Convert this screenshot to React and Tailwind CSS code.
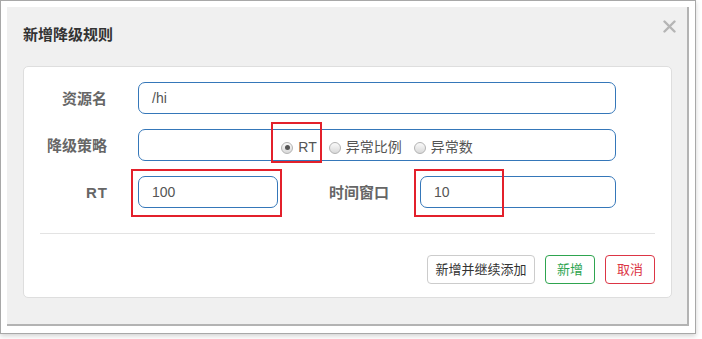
import React from 'react';

const font = { fontFamily: '"Liberation Sans", "Noto Sans CJK SC", sans-serif' };

const Radio = ({ checked, label }) => (
    <label className="flex items-center">
        <span className="w-[12px] h-[12px] rounded-full border border-[#b3b3b3] bg-gradient-to-b from-[#fafafa] to-[#d9d9d9] flex items-center justify-center">
            {checked && <span className="w-[5px] h-[5px] rounded-full bg-[#555]" />}
        </span>
        <span className="ml-[5px] text-[14px] text-[#555]">{label}</span>
    </label>
);

const Field = ({ value, className }) => (
    <div className={`h-[32px] rounded-[7px] border border-[#3577b9] bg-white flex items-center pl-[13px] text-[14px] text-[#555] ${className}`}>
        {value}
    </div>
);

const RedBox = ({ className }) => (
    <div className={`absolute border-2 border-[#e3202b] pointer-events-none ${className}`} />
);

const App = () => {
    return (
        <div className="w-[702px] h-[339px] bg-white" style={font}>
            <div className="w-[696px] h-[334px] border border-[#a8a8a8] bg-white pt-[6px] pl-[6px] shadow-[0_2px_5px_rgba(0,0,0,0.18)]">
                <div className="relative w-[682px] h-[319px] bg-[#f0f0f0] border-r-2 border-b-2 border-[#b3b3b3]">
                    <div className="h-[59px] flex items-center pl-[16px] pb-[2px]">
                        <span className="text-[15px] font-bold text-[#333]">新增降级规则</span>
                    </div>
                    <button className="absolute right-[11px] top-[12px] w-[14px] h-[14px] flex items-center justify-center">
                        <svg width="13" height="13" viewBox="0 0 13 13">
                            <path d="M1.5 1.5 L11.5 11.5 M11.5 1.5 L1.5 11.5" stroke="#b5b5b5" strokeWidth="2.4" strokeLinecap="round" />
                        </svg>
                    </button>

                    <div className="ml-[16px] w-[649px] h-[232px] bg-white rounded-[5px] border border-[#dedede] pt-[15px] px-[16px]">
                        <div className="flex flex-col gap-[15px]">
                            <div className="flex items-center">
                                <div className="w-[67px] pt-[3px] text-right text-[15px] font-bold text-[#666]">资源名</div>
                                <Field value="/hi" className="ml-[31px] w-[478px]" />
                            </div>
                            <div className="flex items-center">
                                <div className="w-[67px] pt-[3px] text-right text-[15px] font-bold text-[#666]">降级策略</div>
                                <div className="relative ml-[31px] w-[478px] h-[32px] rounded-[7px] border border-[#3577b9] flex items-center justify-center gap-[12px] pt-[5px]">
                                    <Radio checked label="RT" />
                                    <Radio label="异常比例" />
                                    <Radio label="异常数" />
                                    <RedBox className="left-[132px] top-[-8px] w-[51px] h-[41px]" />
                                </div>
                            </div>
                            <div className="flex items-center">
                                <div className="w-[68px] pt-[2px] text-right text-[15px] font-bold text-[#666] tracking-[1px]">RT</div>
                                <div className="relative ml-[30px]">
                                    <Field value="100" className="w-[140px]" />
                                    <RedBox className="left-[-7px] top-[-7px] w-[151px] h-[48px]" />
                                </div>
                                <div className="ml-[51px] pt-[2px] text-[15px] font-bold text-[#666]">时间窗口</div>
                                <div className="relative ml-[31px]">
                                    <Field value="10" className="w-[196px]" />
                                    <RedBox className="left-[-6px] top-[-7px] w-[90px] h-[48px]" />
                                </div>
                            </div>
                        </div>

                        <div className="mt-[25px] h-px bg-[#e3e3e3]" />

                        <div className="mt-[21px] flex justify-end gap-[10px]">
                            <button className="w-[108px] h-[29px] rounded-[4px] border border-[#cccccc] bg-white text-[13px] text-[#333]">新增并继续添加</button>
                            <button className="w-[50px] h-[29px] rounded-[4px] border border-[#2ea44f] bg-white text-[13px] text-[#2ea44f]">新增</button>
                            <button className="w-[50px] h-[29px] rounded-[4px] border border-[#dc3545] bg-white text-[13px] text-[#dc3545]">取消</button>
                        </div>
                    </div>
                </div>
            </div>
        </div>
    );
};

export default App;
